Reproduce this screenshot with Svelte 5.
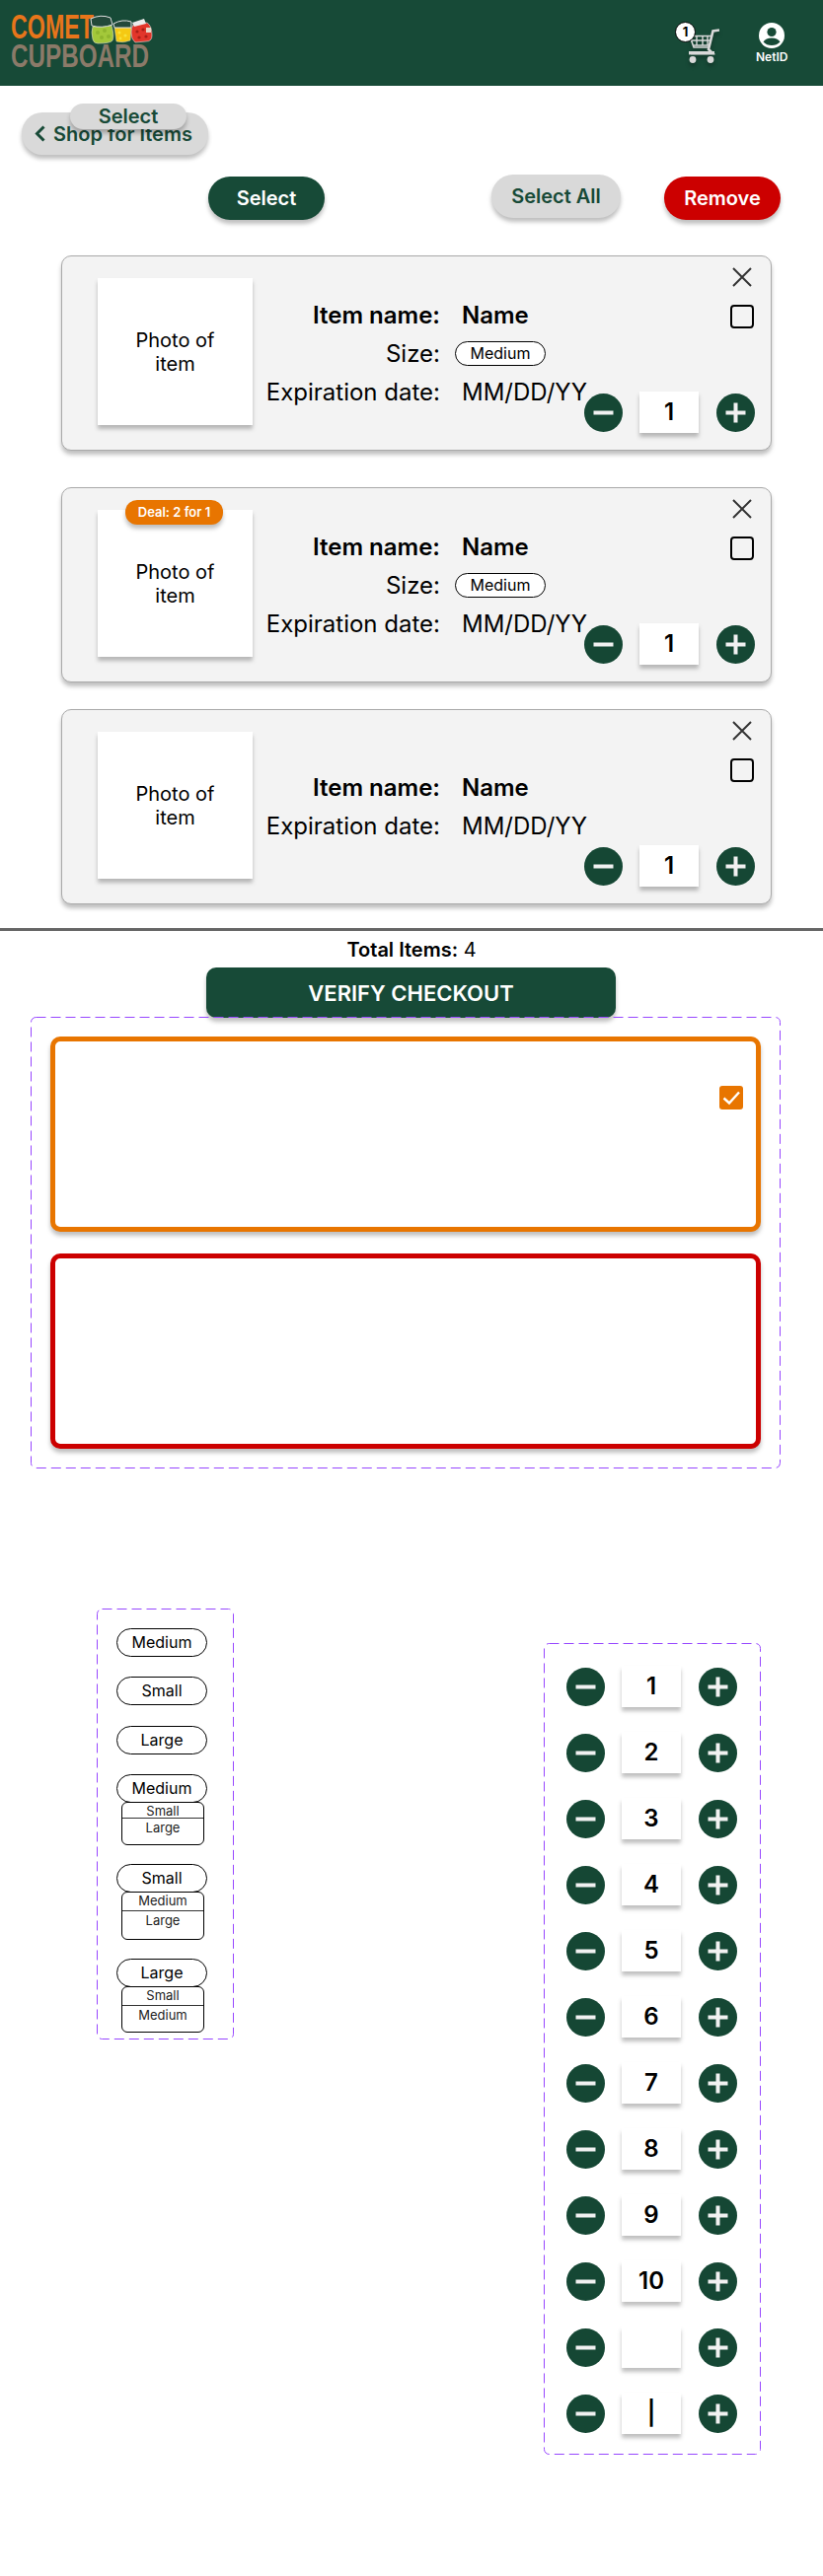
<script>
	const cards = [
		{ hasSize: true, deal: false, gap: 37 },
		{ hasSize: true, deal: true, gap: 27 },
		{ hasSize: false, deal: false, gap: 24 }
	];

	const plainSizes = ["Medium", "Small", "Large"];
	const openSizes = [
		{ label: "Medium", first: "Small", second: "Large", firstHeight: 15, height: 44 },
		{ label: "Small", first: "Medium", second: "Large", firstHeight: 18, height: 49 },
		{ label: "Large", first: "Small", second: "Medium", firstHeight: 18, height: 47 }
	];

	const counts = ["1", "2", "3", "4", "5", "6", "7", "8", "9", "10", "", "|"];
</script>

{#snippet stepper(value)}
	<div class="stepper">
		<button type="button" class="round" aria-label="Decrease">
			<svg viewBox="0 0 39 39" width="39" height="39">
				<circle cx="19.5" cy="19.5" r="19.5" fill="#154734" />
				<rect x="9.5" y="17.5" width="20" height="4" fill="#f1f1f1" />
			</svg>
		</button>
		<div class="count">{value}</div>
		<button type="button" class="round" aria-label="Increase">
			<svg viewBox="0 0 39 39" width="39" height="39">
				<circle cx="19.5" cy="19.5" r="19.5" fill="#154734" />
				<rect x="9.5" y="17.5" width="20" height="4" fill="#f1f1f1" />
				<rect x="17.5" y="9.5" width="4" height="20" fill="#f1f1f1" />
			</svg>
		</button>
	</div>
{/snippet}

{#snippet dashes()}
	<svg class="dashes" aria-hidden="true"><rect /></svg>
{/snippet}

<header class="topbar">
	<svg class="logo" viewBox="0 0 160 87" width="160" height="87" role="img" aria-label="Comet Cupboard">
		<text x="11" y="39" class="logo-top" textLength="84" lengthAdjust="spacingAndGlyphs">COMET</text>
		<text x="11" y="68" class="logo-bottom" textLength="140" lengthAdjust="spacingAndGlyphs">CUPBOARD</text>
		<!-- green jar -->
		<path d="M94 27 L113 26 Q116 36 114 41 Q112 44 99 44 Q95 44 94 40 Q92 32 94 27 Z" fill="#a3c83a" stroke="#dcdcc8" stroke-width=".6" />
		<path d="M92 19 Q102 14 112 18 L114 25 Q103 29 93 26 Z" fill="#23493a" stroke="#dedede" stroke-width="1" />
		<g fill="#8fb52e">
			<circle cx="99" cy="33" r="2" /><circle cx="106" cy="31" r="2" /><circle cx="103" cy="38" r="2" />
			<circle cx="110" cy="37" r="2" />
		</g>
		<!-- yellow jar -->
		<path d="M116 28 L133 28 L132 41 Q125 44 118 42 Z" fill="#f5c913" stroke="#dcdcc8" stroke-width=".5" />
		<path d="M115 24 Q124 19 133 22 L133 28 L116 28 Z" fill="#23493a" stroke="#dedede" stroke-width="1" />
		<g fill="#f7e23a">
			<circle cx="121" cy="33" r="1.6" /><circle cx="127" cy="36" r="1.6" /><circle cx="122" cy="39" r="1.4" />
		</g>
		<!-- red jar -->
		<path d="M135 25 L149 23 Q154 26 154 36 Q154 42 148 42 L137 43 Q133 40 133 33 Q133 28 135 25 Z" fill="#e2362a" stroke="#dddddd" stroke-width=".6" />
		<path d="M134 23 L146 19 L148 24 L136 27 Z" fill="#ececec" />
		<rect x="148" y="28" width="5" height="5" fill="#e8d8c8" />
		<g fill="#a81e16">
			<circle cx="139" cy="32" r="1.6" /><circle cx="145" cy="30" r="1.6" /><circle cx="141" cy="38" r="1.6" />
			<circle cx="148" cy="37" r="1.6" />
		</g>
	</svg>

	<div class="cart">
		<svg class="cart-icon" viewBox="0 0 32 36" width="32" height="36" aria-hidden="true">
			<g fill="none" stroke="#d9d9d9">
				<path d="M32 2.5 L25.5 3.5 L21 22 L25 26 L3 26" stroke-width="2.6" />
				<path d="M2 8.5 H24 M4 13 H23 M6 18 H22 M9 8 V18 M15 8 V18 M20 8 V18" stroke-width="1.4" />
				<path d="M2 8.5 L6 20 H21" stroke-width="1.6" />
			</g>
			<rect x="1" y="24" width="26" height="3.4" fill="#d9d9d9" />
			<circle cx="5" cy="32.5" r="3.4" fill="#d9d9d9" />
			<circle cx="23" cy="32.5" r="3.4" fill="#d9d9d9" />
		</svg>
		<span class="cart-badge">1</span>
	</div>

	<div class="user">
		<svg viewBox="0 0 26 26" width="26" height="26" aria-hidden="true">
			<circle cx="13" cy="13" r="13" fill="#fff" />
			<circle cx="13" cy="9.5" r="4.6" fill="#174a37" />
			<path d="M4.5 19.5 Q7 15.5 13 15.5 Q19 15.5 21.5 19.5 Q18 23 13 23 Q8 23 4.5 19.5 Z" fill="#174a37" />
		</svg>
		<span>NetID</span>
	</div>
</header>

<div class="back-row">
	<button type="button" class="btn grey back">
		<svg viewBox="0 0 11 17" width="11" height="17" aria-hidden="true">
			<path d="M9.5 1.5 L2.5 8.5 L9.5 15.5" fill="none" stroke="#174a37" stroke-width="3" />
		</svg>
		Shop for Items
	</button>
	<button type="button" class="btn grey back-select">Select</button>
</div>

<div class="actions">
	<button type="button" class="btn green action">Select</button>
	<button type="button" class="btn grey action select-all">Select All</button>
	<button type="button" class="btn red action remove">Remove</button>
</div>

<section class="cards">
	{#each cards as card}
		<article class="card" style="margin-bottom: {card.gap}px">
			<div class="photo">
				{#if card.deal}
					<span class="deal">Deal: 2 for 1</span>
				{/if}
				<p>Photo of<br />item</p>
			</div>

			<dl class="info">
				<dt class="strong">Item name:</dt>
				<dd class="strong">Name</dd>
				{#if card.hasSize}
					<dt>Size:</dt>
					<dd><span class="pill small">Medium</span></dd>
				{/if}
				<dt>Expiration date:</dt>
				<dd>MM/DD/YY</dd>
			</dl>

			<div class="controls">
				<svg class="close" viewBox="0 0 20 20" width="20" height="20" aria-label="Remove item">
					<path d="M1 1 L19 19 M19 1 L1 19" stroke="#333" stroke-width="2" fill="none" />
				</svg>
				<span class="check"></span>
				{@render stepper("1")}
			</div>
		</article>
	{/each}
</section>

<hr class="divider" />

<p class="total"><strong>Total Items:</strong> 4</p>
<button type="button" class="verify">VERIFY CHECKOUT</button>

<section class="states">
	{@render dashes()}
	<div class="state orange">
		<span class="checked">
			<svg viewBox="0 0 24 24" width="24" height="24" aria-hidden="true">
				<path d="M4.5 12.5 L10 17.5 L20 6.5" fill="none" stroke="#fff" stroke-width="2.4" />
			</svg>
		</span>
	</div>
	<div class="state crimson"></div>
</section>

<div class="variants">
	<section class="sizes">
		{@render dashes()}
		{#each plainSizes as size}
			<span class="pill large">{size}</span>
		{/each}
		{#each openSizes as size}
			<div class="open-size">
				<span class="pill large">{size.label}</span>
				<ul class="menu" style="height: {size.height}px">
					<li style="height: {size.firstHeight}px">{size.first}</li>
					<li>{size.second}</li>
				</ul>
			</div>
		{/each}
	</section>

	<section class="steppers">
		{@render dashes()}
		{#each counts as value}
			{@render stepper(value)}
		{/each}
	</section>
</div>

<style>
	:global(body) {
		margin: 0;
		background: #fff;
		font-family: Inter, "Liberation Sans", sans-serif;
		color: #000;
	}

	button {
		font-family: inherit;
		border: none;
		padding: 0;
		cursor: pointer;
	}

	.topbar {
		position: relative;
		display: flex;
		align-items: flex-start;
		height: 87px;
		background: #174a37;
	}

	.logo {
		display: block;
		flex: none;
	}

	.logo-top,
	.logo-bottom {
		font-family: "Liberation Sans", sans-serif;
		font-weight: 700;
	}

	.logo-top {
		font-size: 35px;
		fill: #e8751a;
	}

	.logo-bottom {
		font-size: 34px;
		fill: #8b7a69;
	}

	.cart {
		position: relative;
		margin: 28px 0 0 537px;
		width: 32px;
		height: 36px;
	}

	.cart-icon {
		display: block;
		filter: drop-shadow(0 3px 2px rgba(0, 0, 0, 0.3));
	}

	.cart-badge {
		position: absolute;
		left: -13px;
		top: -6px;
		width: 19px;
		height: 19px;
		box-sizing: content-box;
		border: 1px solid #000;
		border-radius: 50%;
		background: #fff;
		font-size: 13px;
		font-weight: 700;
		line-height: 19px;
		text-align: center;
	}

	.user {
		display: flex;
		flex-direction: column;
		align-items: center;
		margin: 23px 0 0 37px;
		color: #fff;
		font-size: 12px;
		font-weight: 600;
		line-height: 16px;
	}

	.user svg {
		display: block;
		margin-bottom: 1px;
	}

	.btn {
		box-shadow: 0 4px 4px rgba(0, 0, 0, 0.25);
		font-weight: 600;
		font-size: 20px;
	}

	.grey {
		background: #d9d9d9;
		color: #174a37;
	}

	.green {
		background: #174a37;
		color: #fff;
	}

	.red {
		background: #cc0000;
		color: #fff;
	}

	.back-row {
		position: relative;
		margin: 27px 0 0 22px;
		height: 43px;
		width: 189px;
	}

	.back {
		display: flex;
		align-items: center;
		gap: 8px;
		width: 189px;
		height: 43px;
		padding-left: 13px;
		border-radius: 21px;
	}

	.back-select {
		position: absolute;
		left: 49px;
		top: -9px;
		width: 118px;
		height: 26px;
		border-radius: 13px;
		line-height: 24px;
	}

	.actions {
		display: flex;
		align-items: flex-start;
		margin: 20px 0 0 211px;
		height: 46px;
	}

	.action {
		width: 118px;
		height: 44px;
		margin-top: 2px;
		border-radius: 22px;
	}

	.select-all {
		width: 131px;
		margin: 0 0 0 169px;
	}

	.remove {
		margin-left: 44px;
	}

	.cards {
		margin: 36px 0 0 62px;
		width: 720px;
	}

	.card {
		display: flex;
		align-items: flex-start;
		box-sizing: border-box;
		height: 198px;
		padding-left: 36px;
		border: 1px solid #a9a9a9;
		border-radius: 10px;
		background: #f3f3f3;
		box-shadow: 0 4px 4px rgba(0, 0, 0, 0.25);
	}

	.photo {
		position: relative;
		flex: none;
		display: flex;
		align-items: center;
		justify-content: center;
		width: 157px;
		height: 149px;
		margin-top: 22px;
		background: #fff;
		box-shadow: 0 4px 4px rgba(0, 0, 0, 0.25);
	}

	.photo p {
		margin: 0;
		font-size: 20px;
		line-height: 24px;
		text-align: center;
	}

	.deal {
		position: absolute;
		left: 28px;
		top: -10px;
		width: 99px;
		height: 25px;
		border-radius: 12px;
		background: #e87500;
		box-shadow: 0 4px 4px rgba(0, 0, 0, 0.25);
		color: #fff;
		font-size: 13px;
		font-weight: 600;
		line-height: 25px;
		text-align: center;
	}

	.info {
		flex: none;
		align-self: center;
		display: grid;
		grid-template-columns: 190px 1fr;
		grid-auto-rows: 39px;
		column-gap: 22px;
		align-items: center;
		width: 336px;
		margin: 0;
		font-size: 24px;
		white-space: nowrap;
	}

	.info dt {
		text-align: right;
	}

	.info dd {
		margin: 0;
	}

	.strong {
		font-weight: 600;
	}

	.pill {
		display: block;
		box-sizing: border-box;
		width: 92px;
		border: 1.5px solid #000;
		border-radius: 15px;
		background: #fff;
		font-size: 16px;
		text-align: center;
	}

	.pill.small {
		height: 25px;
		margin-left: -7px;
		line-height: 22px;
	}

	.pill.large {
		height: 29px;
		line-height: 26px;
	}

	.controls {
		display: flex;
		flex-direction: column;
		align-items: flex-end;
		width: 173px;
	}

	.close {
		display: block;
		margin: 11px 3px 0 0;
	}

	.check {
		display: block;
		box-sizing: border-box;
		width: 24px;
		height: 24px;
		margin: 18px 1px 0 0;
		border: 2px solid #000;
		border-radius: 4px;
	}

	.controls .stepper {
		margin-top: 64px;
	}

	.stepper {
		display: flex;
		align-items: center;
		width: 173px;
		height: 42px;
	}

	.round {
		display: block;
		flex: none;
		width: 39px;
		height: 39px;
		background: none;
	}

	.round svg {
		display: block;
	}

	.count {
		flex: none;
		width: 60px;
		height: 42px;
		margin: 0 18px 0 17px;
		background: #fff;
		box-shadow: 0 4px 4px rgba(0, 0, 0, 0.25);
		font-size: 24px;
		font-weight: 600;
		line-height: 42px;
		text-align: center;
	}

	.divider {
		height: 3px;
		margin: 0;
		border: none;
		background: #666;
	}

	.total {
		margin: 7px 0 6px;
		font-size: 20px;
		line-height: 24px;
		text-align: center;
	}

	.total strong {
		font-weight: 600;
	}

	.verify {
		display: block;
		width: 415px;
		height: 51px;
		margin-left: 209px;
		border-radius: 10px;
		background: #174a37;
		box-shadow: 0 4px 4px rgba(0, 0, 0, 0.25);
		color: #fff;
		font-size: 22px;
		font-weight: 600;
	}

	.states,
	.sizes,
	.steppers {
		position: relative;
		box-sizing: border-box;
	}

	.dashes {
		position: absolute;
		inset: 0;
		width: 100%;
		height: 100%;
		pointer-events: none;
	}

	.dashes rect {
		x: 0.5px;
		y: 0.5px;
		width: calc(100% - 1px);
		height: calc(100% - 1px);
		rx: 5px;
		fill: none;
		stroke: #9747ff;
		stroke-width: 1;
		stroke-dasharray: 10 5;
	}

	.states {
		display: flex;
		flex-direction: column;
		gap: 22px;
		width: 760px;
		height: 458px;
		margin: -1px 0 0 31px;
		padding: 20px;
	}

	.state {
		position: relative;
		box-sizing: border-box;
		height: 198px;
		border: 5px solid;
		border-radius: 10px;
		background: #fff;
		box-shadow: 0 4px 4px rgba(0, 0, 0, 0.25);
	}

	.orange {
		border-color: #e87500;
	}

	.crimson {
		border-color: #cc0000;
	}

	.checked {
		position: absolute;
		right: 13px;
		top: 45px;
		width: 24px;
		height: 24px;
		border-radius: 3px;
		background: #e87500;
	}

	.checked svg {
		display: block;
	}

	.variants {
		display: flex;
		align-items: flex-start;
		margin: 142px 0 0 98px;
	}

	.sizes {
		display: flex;
		flex-direction: column;
		width: 139px;
		height: 437px;
		padding: 20px 0 0 20px;
		gap: 20.3px;
	}

	.open-size {
		margin-bottom: -1px;
	}

	.menu {
		box-sizing: border-box;
		width: 84px;
		margin: -1px 0 0 5px;
		padding: 0;
		list-style: none;
		border: 1px solid #000;
		border-radius: 6px;
		background: #fff;
		font-size: 13px;
		color: #222;
		text-align: center;
	}

	.menu li {
		line-height: 16px;
	}

	.menu li:first-child {
		box-sizing: content-box;
		border-bottom: 1px solid #333;
	}

	.menu li + li {
		line-height: 18px;
	}

	.steppers {
		display: flex;
		flex-direction: column;
		gap: 25px;
		width: 220px;
		height: 823px;
		margin: 35px 0 0 314px;
		padding: 23px 0 0 23px;
	}
</style>
